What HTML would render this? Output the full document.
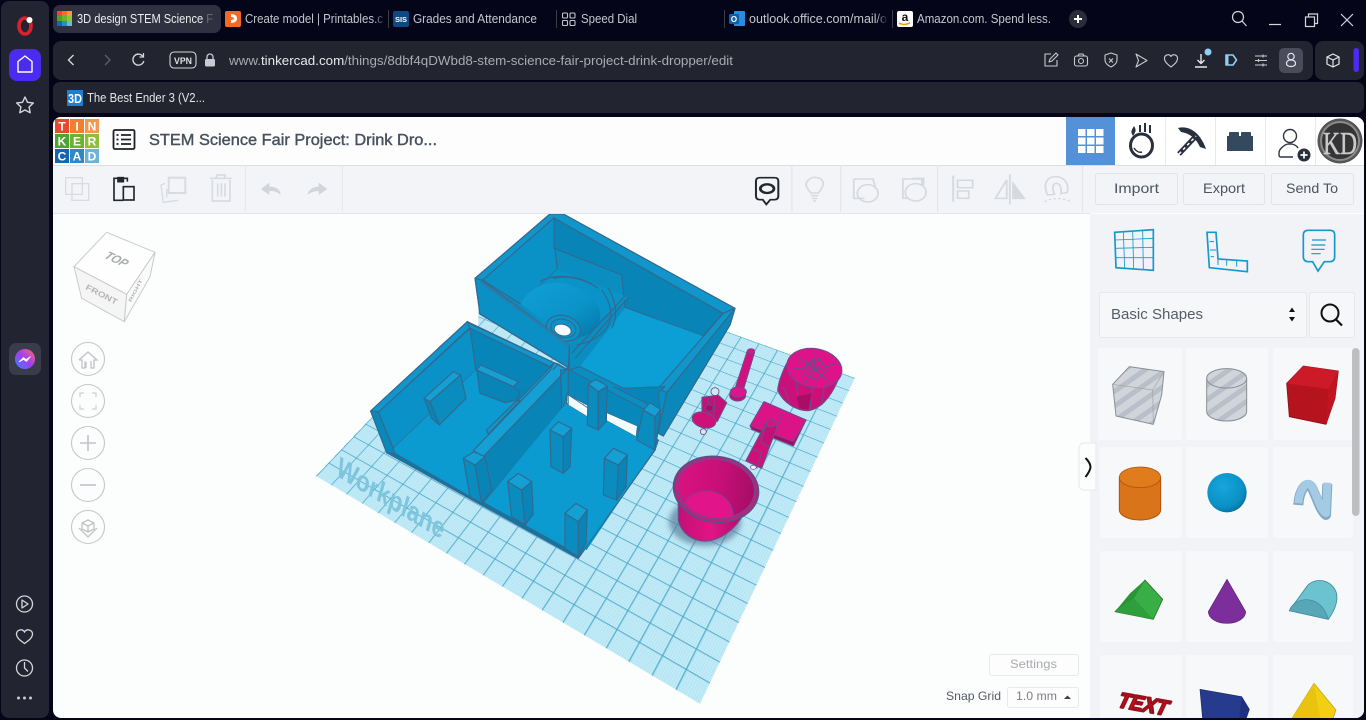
<!DOCTYPE html>
<html><head><meta charset="utf-8"><title>3D design STEM Science Fair Project</title>
<style>
html,body{margin:0;padding:0;width:1366px;height:720px;overflow:hidden;background:#05051a}
svg{position:absolute;display:block}
#page{position:absolute;left:53px;top:117px;width:1311px;height:601px;border-radius:8px;overflow:hidden;background:#fcfdfd}
#origin{position:absolute;left:-53px;top:-117px;width:0;height:0}
#plane{position:absolute;left:0;top:0;width:1000px;height:1000px;transform-origin:0 0;
transform:matrix3d(.17426,.05026,0,-.00018449,-.27333,.11809,0,-.00020989,0,0,1,0,523,258,0,1);
background-color:#c6ecf8;
background-image:linear-gradient(to right,rgba(70,165,200,.72) 2.6px,transparent 2.6px),linear-gradient(to bottom,rgba(70,165,200,.72) 2.6px,transparent 2.6px),linear-gradient(to right,rgba(95,190,220,.24) 1.4px,transparent 1.4px),linear-gradient(to bottom,rgba(95,190,220,.24) 1.4px,transparent 1.4px);
background-size:50px 50px,50px 50px,5px 5px,5px 5px}
text{font-family:"Liberation Sans",sans-serif}
</style></head><body>
<svg width="1366" height="720" viewBox="0 0 1366 720" style="left:0;top:0">
<defs>
<linearGradient id="fade" x1="0" x2="1"><stop offset="0" stop-color="#05051a" stop-opacity="0"/><stop offset="1" stop-color="#05051a"/></linearGradient>
<linearGradient id="msg" x1="0" y1="1" x2="1" y2="0"><stop offset="0" stop-color="#2f8cff"/><stop offset=".5" stop-color="#a33df0"/><stop offset="1" stop-color="#ff6a6a"/></linearGradient>
</defs>
<rect width="1366" height="720" fill="#05051a"/>
<!-- sidebar -->
<rect x="1" y="1" width="48" height="717" rx="8" fill="#222431"/>
<ellipse cx="25" cy="26" rx="6" ry="8" fill="none" stroke="#d8222e" stroke-width="3.6"/>
<circle cx="29.5" cy="20" r="3" fill="#fff"/>
<rect x="9" y="49" width="32" height="32" rx="8" fill="#4b2bf0"/>
<path d="M18 61.5 25 56l7 5.5V72H18Z" fill="none" stroke="#fff" stroke-width="1.4" stroke-linejoin="round"/>
<path d="M25 97l2.5 5.3 5.8.7-4.2 4 1.1 5.7L25 110l-5.2 2.7 1.1-5.7-4.2-4 5.8-.7Z" fill="none" stroke="#d5d6da" stroke-width="1.4" stroke-linejoin="round"/>
<rect x="9" y="343" width="32" height="32" rx="7" fill="#3a3c4b"/>
<circle cx="25" cy="359" r="10" fill="url(#msg)"/>
<path d="M19 362l4.5-4.5 2.5 2 4.5-3-4 5-3-2Z" fill="#fff" stroke="#fff" stroke-width=".7"/>
<g fill="none" stroke="#d5d6da" stroke-width="1.3">
<circle cx="24.5" cy="604" r="8"/><path d="M22 600l6 4-6 4Z" stroke-linejoin="round"/>
<path d="M24.5 643.5c-4-3-8-5.500-8-9.500a4.300 4.300 0 0 1 8-2 4.300 4.300 0 0 1 8 2c0 4-4 6.500-8 9.500Z"/>
<circle cx="24.500" cy="668" r="8"/><path d="M24.500 662v6l3.500 3.500"/>
</g>
<g fill="#c9cad0"><circle cx="18.500" cy="698" r="1.500"/><circle cx="24.500" cy="698" r="1.500"/><circle cx="30.500" cy="698" r="1.500"/></g>
<!-- tabs -->
<rect x="53" y="5" width="168" height="28" rx="7" fill="#2f3140"/>
<g font-size="12.500" fill="#c5c6cc">
<text x="77" y="23" textLength="136" lengthAdjust="spacingAndGlyphs" fill="#eceded">3D design STEM Science F</text>
<text x="245" y="23" textLength="138" lengthAdjust="spacingAndGlyphs">Create model | Printables.c</text>
<text x="413" y="23" textLength="124" lengthAdjust="spacingAndGlyphs">Grades and Attendance</text>
<text x="581" y="23" textLength="56" lengthAdjust="spacingAndGlyphs">Speed Dial</text>
<text x="749" y="23" textLength="138" lengthAdjust="spacingAndGlyphs">outlook.office.com/mail/o</text>
<text x="917" y="23" textLength="134" lengthAdjust="spacingAndGlyphs">Amazon.com. Spend less. </text>
</g>
<rect x="203" y="8" width="15" height="22" fill="#2f3140" opacity=".7"/>
<rect x="373" y="8" width="13" height="22" fill="url(#fade)"/>
<rect x="875" y="8" width="13" height="22" fill="url(#fade)"/>
<g stroke="#3a3c48" stroke-width="1"><path d="M388.500 10v18M556.500 10v18M724.500 10v18M892.500 10v18"/></g>
<!-- favicons -->
<rect x="57" y="11" width="5" height="5" fill="#e8482f"/><rect x="62" y="11" width="5" height="5" fill="#f0712e"/><rect x="67" y="11" width="5" height="5" fill="#f29a4a"/>
<rect x="57" y="16" width="5" height="5" fill="#4a9f35"/><rect x="62" y="16" width="5" height="5" fill="#6db32f"/><rect x="67" y="16" width="5" height="5" fill="#92c43a"/>
<rect x="57" y="21" width="5" height="5" fill="#1668ae"/><rect x="62" y="21" width="5" height="5" fill="#2f8ac6"/><rect x="67" y="21" width="5" height="5" fill="#70b6da"/>
<rect x="225" y="11" width="16" height="16" rx="2" fill="#f26a26"/><path d="M231 14c4 0 6 2 6 4.500S235 23 231 23v-3c1.500 0 3-.5 3-1.500S232.500 17 231 17Z" fill="#fff"/>
<rect x="393" y="11" width="16" height="16" rx="2" fill="#0b4a82"/><text x="401" y="22" font-size="7.500" font-weight="700" fill="#fff" text-anchor="middle">SIS</text>
<g fill="none" stroke="#c5c6cc" stroke-width="1.100"><rect x="562.500" y="13" width="5" height="5" rx="1"/><rect x="570" y="13" width="5" height="5" rx="1"/><rect x="562.500" y="20.500" width="5" height="5" rx="1"/><rect x="570" y="20.500" width="5" height="5" rx="1"/></g>
<rect x="734" y="11" width="11" height="15" rx="1" fill="#2a8ddb"/><rect x="729" y="14" width="10" height="10" rx="1" fill="#0c5fa8"/><text x="734" y="22" font-size="8" font-weight="700" fill="#fff" text-anchor="middle">O</text>
<rect x="897" y="11" width="16" height="16" rx="2" fill="#fff"/><text x="905" y="21" font-size="12" font-weight="700" fill="#111" text-anchor="middle">a</text><path d="M899 23c3 2 8 2 11-.5" stroke="#f09a1a" stroke-width="1.500" fill="none"/>
<circle cx="1078" cy="19" r="9" fill="#2a2c3a"/><path d="M1078 15v8M1074 19h8" stroke="#fff" stroke-width="2"/>
<!-- window controls -->
<g fill="none" stroke="#d5d6da" stroke-width="1.200">
<circle cx="1238" cy="17" r="5.500"/><path d="M1242 21l4.500 5"/>
<path d="M1269 24.500h12"/>
<rect x="1305.500" y="17" width="9" height="9.500"/><path d="M1308.500 17v-3h9v9.500h-3"/>
<path d="M1341 14l12 12M1353 14l-12 12"/>
</g>
<!-- address bar -->
<rect x="53" y="41" width="1260" height="39" rx="8" fill="#22242f"/>
<rect x="1315" y="41" width="49" height="39" rx="8" fill="#22242f"/>
<rect x="53" y="82" width="1311" height="31" rx="7" fill="#22242f"/>
<g fill="none" stroke="#d5d6da" stroke-width="1.400">
<path d="M73.500 55l-5 5 5 5"/><path d="M105 55l5 5-5 5" stroke="#5a5c68"/>
<path d="M143 56.500a5.500 5.500 0 1 0 .8 4.500"/><path d="M143.500 53v4h-4" stroke-width="1.200"/>
<rect x="170" y="52" width="26" height="16" rx="4" stroke-width="1.100"/>
</g>
<text x="174" y="64" font-size="9.500" font-weight="700" fill="#e0e1e5" textLength="18" lengthAdjust="spacingAndGlyphs">VPN</text>
<rect x="205" y="59" width="10" height="7.500" rx="1.200" fill="#c9cad0"/><path d="M207 59v-2a3 3 0 0 1 6 0v2" fill="none" stroke="#c9cad0" stroke-width="1.300"/>
<text x="229" y="65" font-size="13" fill="#a9abb3" textLength="504" lengthAdjust="spacingAndGlyphs">www.<tspan fill="#e8e9ec">tinkercad.com</tspan>/things/8dbf4qDWbd8-stem-science-fair-project-drink-dropper/edit</text>
<g fill="none" stroke="#c9cad0" stroke-width="1.100" stroke-linejoin="round">
<path d="M1051 54h-6v12h12v-6M1049 62l1-3 6-6 2 2-6 6Z"/>
<rect x="1074.500" y="56" width="13" height="10" rx="2"/><circle cx="1081" cy="61" r="2.500"/><path d="M1078 56l1-2h4l1 2"/>
<path d="M1111 53l6 2v5c0 3-3 5.500-6 7-3-1.500-6-4-6-7v-5Z"/><path d="M1109 58.500l4 4M1113 58.500l-4 4"/>
<path d="M1136 54l11 6.500-11 6.500 2.500-6.500Z"/>
<path d="M1171 67c-3-2.500-6.500-5-6.500-8.500a3.500 3.500 0 0 1 6.500-2 3.500 3.500 0 0 1 6.500 2c0 3.500-3.500 6-6.500 8.500Z"/>
<path d="M1201 54v9M1197.500 60l3.500 3.500 3.500-3.500M1195 67h12" stroke="#e5e6ea" stroke-width="1.400"/>
<path d="M1226 55h7l3.500 5-3.500 5h-7Z" stroke="#8cd0f5" stroke-width="1.600"/>
<path d="M1255 56h12M1255 60.500h12M1255 65h12"/><path d="M1263 54.500v3M1258.500 59v3M1263 63.500v3"/>
</g>
<rect x="1226" y="55" width="2.500" height="10" fill="#8cd0f5"/>
<circle cx="1208" cy="52" r="3.500" fill="#8cd0f5"/>
<rect x="1279" y="48" width="24" height="25" rx="5" fill="#4a4c5c"/>
<g fill="none" stroke="#e5e6ea" stroke-width="1.200"><circle cx="1291" cy="56.500" r="3.200"/><path d="M1291 60c-3 0-4.500 1.500-4.500 3.500s2 3 4.500 3 4.500-1 4.500-3-1.500-3.500-4.500-3.500Z"/>
<path d="M1333 54l6 3v7l-6 3-6-3v-7Zm-6 3l6 3 6-3m-6 3v7"/></g>
<rect x="1353.500" y="48" width="5.500" height="24" rx="2.700" fill="#4b2bf0"/>
<!-- bookmarks -->
<rect x="67" y="90" width="16" height="16" fill="#1c7fd0"/>
<text x="68" y="103" font-size="13" font-weight="700" fill="#fff" textLength="14" lengthAdjust="spacingAndGlyphs">3D</text>
<text x="87" y="102" font-size="12.500" fill="#e3e4e8" textLength="118" lengthAdjust="spacingAndGlyphs">The Best Ender 3 (V2...</text>
</svg>

<div id="page">
<div id="origin"><div id="plane"></div>
<svg width="1366" height="720" viewBox="0 0 1366 720" style="left:0;top:0">
<defs>
<pattern id="st" width="36" height="36" patternUnits="userSpaceOnUse" patternTransform="rotate(-35)"><rect width="36" height="36" fill="#d0d5db"/><rect width="36" height="15" fill="#b8bfc8"/></pattern>
<linearGradient id="dome" x1="0" y1="0" x2="1" y2="1"><stop offset="0" stop-color="#0fa0d6"/><stop offset=".6" stop-color="#0a93c8"/><stop offset="1" stop-color="#0575a6"/></linearGradient>
<linearGradient id="cupin" x1="0" x2="1"><stop offset="0" stop-color="#d9127f"/><stop offset=".55" stop-color="#c70f78"/><stop offset="1" stop-color="#a50d66"/></linearGradient>
<linearGradient id="cupb" x1="0" x2="1"><stop offset="0" stop-color="#c30f76"/><stop offset=".5" stop-color="#e01585"/><stop offset="1" stop-color="#b00c6a"/></linearGradient>
<radialGradient id="sph" cx=".4" cy=".35" r=".75"><stop offset="0" stop-color="#16a7dc"/><stop offset=".7" stop-color="#0a8fc4"/><stop offset="1" stop-color="#05628f"/></radialGradient>
<filter id="blur" x="-30%" y="-30%" width="160%" height="160%"><feGaussianBlur stdDeviation="8"/></filter>
</defs>

<!-- patch above left room so plane does not peek out -->
<path d="M372 408 467 321 478 330 480 262 440 285 365 375Z" fill="#fcfdfd"/>
<text transform="matrix(.86 .52 -.28 .96 335 475)" font-size="28" font-weight="700" fill="#7fc5dd" textLength="124" lengthAdjust="spacingAndGlyphs">Workplane</text>

<!-- BLUE MODEL -->
<g transform="translate(350 210) scale(.33333)" stroke="#33698f" stroke-width="3.500" stroke-linejoin="round">
<path d="M375 205 600 12 640 12 1155 295 1140 345 940 678 925 670 925 620 655 480 650 470 390 312Z" fill="#0a8ec2"/>
<path d="M375 205 600 12 640 12 1155 295 1120 310 612 24 398 212Z" fill="#1096cb"/>
<path d="M398 210 612 24 615 115 622 178 512 282Z" fill="#0a92c7"/>
<path d="M612 24 1120 310 1058 378 825 292 815 195 612 115Z" fill="#0884b6"/>
<path d="M825 294 1058 378 945 530 820 535 690 470Z" fill="#0b9fd6" stroke="none"/>
<path d="M512 282 622 178 835 262 655 405Z" fill="#0a93c8" stroke="none"/>
<path d="M512 282C540 225 610 205 665 225 730 250 765 300 745 345 725 372 700 380 680 385 650 375 590 335 512 282Z" fill="url(#dome)" stroke="none"/>
<path d="M570 215C610 190 680 195 730 225M610 205C650 195 700 205 745 235M755 240C785 280 790 320 770 355 745 385 710 400 680 405M775 235C805 285 800 330 785 355" fill="none"/>
<path d="M835 262 675 445M825 258 665 430" fill="none"/>
<ellipse cx="640" cy="355" rx="52" ry="38" fill="#0a93c8" transform="rotate(15 640 355)"/>
<ellipse cx="640" cy="355" rx="38" ry="27" fill="#0a93c8" transform="rotate(15 640 355)"/>
<ellipse cx="638" cy="360" rx="26" ry="17" fill="#f4fbfe" stroke-width="3" transform="rotate(15 638 360)"/>
<path d="M392 212 658 405 658 472 388 310Z" fill="#0a8ec2"/>
<path d="M375 205 395 210 658 405 655 480 650 470 390 312Z" fill="#0a90c5"/>
<path d="M392 215 660 408" fill="none" stroke-width="7" stroke="#2f7aa6"/>
<path d="M390 312 650 470" fill="none"/>
<path d="M1120 310 1155 295 950 548 925 535Z" fill="#1096cb"/>
<path d="M1155 295 1140 345 940 678 925 670 950 548Z" fill="#0a88ba"/>
<path d="M655 480 690 470 820 535 945 530 925 545 925 670 655 540Z" fill="#0a8ec2"/>
<path d="M820 535 945 530 925 548 930 600 790 530" fill="#0885b8" stroke-width="3"/>
<path d="M62 603 352 335 610 458 655 480 650 580 925 690 915 720 685 1045 110 728Z" fill="#0b9ad0"/>
<path d="M640 590 925 700 710 1020 400 880Z" fill="#0b9bd1" stroke="none"/>
<path d="M62 603 352 335 368 345 85 607 110 728Z" fill="#1096cb"/>
<path d="M85 607 360 355 378 480 130 715Z" fill="#0a92c8"/>
<path d="M360 355 612 460 500 575 378 480Z" fill="#0885b8"/>
<path d="M130 715 378 480 395 555 500 575 410 660 405 680 340 745 355 855Z" fill="#0b9bd1" stroke="none"/>
<path d="M352 335 368 345 612 458 600 470 360 355Z" fill="#1096cb"/>
<path d="M62 603 85 605 135 730 110 728Z" fill="#0a88ba"/>
<path d="M222 565 310 485 332 495 240 575Z" fill="#14a0d4"/>
<path d="M240 575 332 495 348 565 268 645Z" fill="#0a8cbf"/>
<path d="M222 565 240 575 268 645 245 625Z" fill="#0884b6"/>
<path d="M380 480 392 465 505 515 490 530Z" fill="#14a0d4"/>
<path d="M380 480 490 530 510 545 500 570 465 578 390 550Z" fill="#0884b6"/>
<path d="M410 660 500 572 510 572 415 672Z" fill="#1096cb"/>
<path d="M370 722 600 482 612 458 650 478 635 495 400 740Z" fill="#14a0d4"/>
<path d="M405 735 632 498 636 605 400 878Z" fill="#0884b6"/>
<path d="M632 480 655 478 655 540 636 605Z" fill="#0a8ec2"/>
<path d="M612 458 625 462 608 480M625 462 650 478 632 498" fill="none"/>
<path d="M655 478 925 620 920 690 860 660 655 555Z" fill="#0888ba" stroke-width="3"/>
<path d="M655 555 715 595 715 622 655 585Z" fill="#f4fbfe" stroke-width="2"/>
<path d="M770 608 862 648 858 680 770 632Z" fill="#f4fbfe" stroke-width="2"/>
<path d="M640 590 655 585 715 622 770 632 858 680 925 700 710 1020 400 880Z" fill="#0b9bd1" stroke="none"/>
<path d="M932 610 915 720 685 1045" fill="none"/>
<path d="M110 728 135 730 360 860 405 880 685 1035 685 1045Z" fill="#0a78a8"/>
<path d="M600 660 640 680 640 790 603 770Z" fill="#0a8cbf"/><path d="M640 680 665 655 660 770 640 790Z" fill="#0884b6"/><path d="M600 660 625 635 665 655 640 680Z" fill="#14a0d4"/>
<path d="M763 745 805 765 800 870 760 855Z" fill="#0a8cbf"/><path d="M805 765 832 735 828 830 800 870Z" fill="#0884b6"/><path d="M763 745 790 715 832 735 805 765Z" fill="#14a0d4"/>
<path d="M473 815 515 840 525 945 485 920Z" fill="#0a8cbf"/><path d="M515 840 545 815 550 912 525 945Z" fill="#0884b6"/><path d="M473 815 505 790 545 815 515 840Z" fill="#14a0d4"/>
<path d="M645 910 685 935 685 1040 645 1015Z" fill="#0a8cbf"/><path d="M685 935 712 900 708 1000 685 1040Z" fill="#0884b6"/><path d="M645 910 678 880 712 900 685 935Z" fill="#14a0d4"/>
<path d="M340 745 375 765 395 880 360 860Z" fill="#0a8cbf"/><path d="M375 765 405 740 425 840 395 880Z" fill="#0884b6"/><path d="M340 745 372 725 405 740 375 765Z" fill="#14a0d4"/>
<path d="M715 522 745 545 745 660 712 645Z" fill="#0a8cbf"/><path d="M745 545 772 528 768 635 745 660Z" fill="#0884b6"/><path d="M715 522 738 508 772 528 745 545Z" fill="#14a0d4"/>
<path d="M880 600 915 620 915 720 860 690Z" fill="#0a8cbf"/><path d="M915 620 932 598 920 690 915 720Z" fill="#0884b6"/><path d="M880 600 900 578 932 598 915 620Z" fill="#14a0d4"/>
</g>

<!-- PINK PARTS -->
<g transform="translate(640 340) scale(.33333)" stroke="#6f4a8a" stroke-width="3.500" stroke-linejoin="round">
<ellipse cx="195" cy="545" rx="108" ry="72" fill="#5c7f9c" opacity=".7" stroke="none" filter="url(#blur)"/>
<path d="M322 32 344 36 310 150 285 146Z" fill="#d21180" stroke-width="3"/>
<ellipse cx="333" cy="33" rx="11" ry="7" fill="#e0148a" stroke-width="2.500"/>
<ellipse cx="293" cy="166" rx="24" ry="17" fill="#c40f76" stroke-width="3"/>
<ellipse cx="295" cy="156" rx="24" ry="15" fill="#e0148a" stroke-width="3"/>
<path d="M440 70 C425 100 415 130 413 150 C430 190 470 212 505 212 C550 205 580 160 602 100Z" fill="#cb1079"/>
<path d="M430 140 450 190M462 90 480 205M520 100 510 212M560 90 545 195" fill="none"/>
<path d="M470 170 478 205 505 208 515 160Z" fill="#a90d66" stroke="none"/>
<ellipse cx="523" cy="84" rx="83" ry="58" fill="#de1389" transform="rotate(10 523 84)"/>
<path d="M475 50 525 90 590 70M520 35 525 90 490 130M460 85 525 90 570 125M500 70 540 55 560 90 530 120 495 105Z" fill="none"/>
<circle cx="525" cy="72" r="14" fill="none"/>
<path d="M372 185 498 240 460 318 330 258Z" fill="#dc1387"/>
<path d="M330 258 335 268 460 318 498 240 460 305Z" fill="#a30c63" stroke-width="2.500"/>
<path d="M428 222 398 282" fill="none"/>
<path d="M380 245 410 262 365 385 318 362Z" fill="#cf1079"/>
<path d="M335 325 365 340 350 385" fill="none"/>
<path d="M376 262 398 240 412 262 388 320 362 305Z" fill="#c40f76"/>
<ellipse cx="393" cy="250" rx="14" ry="11" fill="#d7127f"/>
<ellipse cx="340" cy="382" rx="9" ry="6" fill="#eaf6fa" stroke-width="2"/>
<circle cx="225" cy="155" r="12" fill="#cfe9f2" stroke-width="2.500"/>
<circle cx="190" cy="275" r="9" fill="#cfe9f2" stroke-width="2.500"/>
<path d="M186 172 235 166 260 188 244 220 232 244 192 245 186 210Z" fill="#c60f77"/>
<ellipse cx="192" cy="240" rx="36" ry="23" fill="#cf1079" transform="rotate(15 192 240)"/>
<path d="M205 172 208 235M225 175 222 230" fill="none" stroke-width="2.500"/>
<ellipse cx="208" cy="204" rx="12" ry="10" fill="#a80d66" stroke-width="2.500"/>
<path d="M115 480 115 540C125 585 165 605 200 603 240 600 285 570 312 520Z" fill="url(#cupb)"/>
<ellipse cx="228" cy="448" rx="128" ry="98" fill="#b5257f" stroke="#5c4f85" stroke-width="5" transform="rotate(8 228 448)"/>
<ellipse cx="228" cy="446" rx="116" ry="88" fill="url(#cupin)" transform="rotate(8 228 446)"/>
<path d="M135 490C140 465 175 450 210 453 250 458 280 490 280 528 235 545 165 535 135 490Z" fill="#e1148a" stroke-width="2.500"/>
</g>

<!-- top bars -->
<rect x="53" y="117" width="1313" height="48" fill="#fff"/>
<rect x="53" y="117" width="1013" height="48" fill="#fdfdfd"/>
<rect x="53" y="165" width="1313" height="1.500" fill="#dcdee2"/>
<rect x="53" y="166" width="1313" height="47" fill="#f2f4f7"/>
<rect x="53" y="213" width="1037" height="1" fill="#e3e5e8"/>
<g font-size="12" font-weight="700" fill="#fff" text-anchor="middle">
<rect x="55" y="119" width="14" height="14" fill="#e5492e"/><text x="62" y="130.500">T</text>
<rect x="70" y="119" width="14" height="14" fill="#f08030"/><text x="77" y="130.500">I</text>
<rect x="85" y="119" width="14" height="14" fill="#f2994d"/><text x="92" y="130.500">N</text>
<rect x="55" y="134" width="14" height="14" fill="#4da436"/><text x="62" y="145.500">K</text>
<rect x="70" y="134" width="14" height="14" fill="#6eb130"/><text x="77" y="145.500">E</text>
<rect x="85" y="134" width="14" height="14" fill="#8fbf3a"/><text x="92" y="145.500">R</text>
<rect x="55" y="149" width="14" height="14" fill="#1566ad"/><text x="62" y="160.500">C</text>
<rect x="70" y="149" width="14" height="14" fill="#2e88c5"/><text x="77" y="160.500">A</text>
<rect x="85" y="149" width="14" height="14" fill="#6db3d8"/><text x="92" y="160.500">D</text>
</g>
<g fill="none" stroke="#1d2126" stroke-width="1.800"><rect x="113.500" y="130" width="21" height="19" rx="1.500"/><path d="M121 135h10M121 139.500h10M121 144h10M116.500 135h2M116.500 139.500h2M116.500 144h2"/></g>
<text x="149" y="145" font-size="16" fill="#47505d" stroke="#47505d" stroke-width=".4" textLength="288" lengthAdjust="spacingAndGlyphs">STEM Science Fair Project: Drink Dro...</text>
<g transform="translate(50 115) scale(.33333)" fill="none" stroke="#d8dbe0" stroke-width="4">
<rect x="47" y="188" width="50" height="50"/><rect x="66" y="206" width="50" height="50"/>
<g stroke="#23272c" stroke-width="5"><path d="M232 200V190H192V256H220"/><rect x="220" y="215" width="32" height="40"/><rect x="204" y="188" width="16" height="12" fill="#23272c"/></g>
<rect x="356" y="188" width="50" height="46" stroke-width="6"/><path d="M345 205 333 210 340 262 385 256M350 222V248"/>
<path d="M480 190H545M500 190V180H525V190M487 195V258H540V195M503 205V245M514 205V245M525 205V245" stroke-width="5"/>
<path d="M633 222 658 203V215C680 215 692 225 692 240 682 230 672 228 658 228V240Z" fill="#d2d5da" stroke="none"/>
<path d="M832 222 806 203V215C790 215 775 225 772 240 782 232 792 228 806 228V240Z" fill="#d2d5da" stroke="none"/>
<path d="M586 150V290M877 150V290" stroke="#e3e5e8" stroke-width="3"/>
</g>
<g transform="translate(740 115) scale(.3992 .33333)" fill="none" stroke="#d6d9de" stroke-width="4.500">
<path d="M130 150V290M252 150V290M495 150V290M858 150V290" stroke="#e3e5e8" stroke-width="3"/>
<path d="M50 188H86Q96 188 96 198V243Q96 254 86 254H76L66 268 57 254H50Q40 254 40 243V198Q40 188 50 188Z" stroke="#23272c" stroke-width="5"/>
<ellipse cx="68" cy="221" rx="17" ry="13" stroke="#23272c" stroke-width="7"/>
<path d="M178 234C165 218 163 205 170 197 180 182 200 186 206 197 212 208 205 222 196 234ZM178 242H196M180 250H194M183 258H191"/>
<path d="M285 192H333C335 205 340 208 338 220M285 192V250H312" /><circle cx="320" cy="235" r="26"/>
<rect x="408" y="192" width="48" height="58"/><circle cx="440" cy="232" r="26" fill="#f2f4f7"/><path d="M432 190H460V210"/>
<path d="M534 182V260" stroke-width="5"/><rect x="545" y="196" width="38" height="22"/><rect x="545" y="228" width="28" height="22"/>
<path d="M668 195 640 250H668ZM676 178V268" /><path d="M684 205 712 250H684Z" fill="#d6d9de"/>
<path d="M770 240C758 205 770 185 790 185 812 185 825 205 820 232L804 236C806 215 800 205 792 205 782 205 782 222 788 238Z"/>
<path d="M763 260C780 250 800 245 830 260" stroke-dasharray="6 6" stroke-width="4"/>
</g>
<g font-size="14" fill="#4d555f">
<rect x="1095.500" y="173.500" width="82" height="31" rx="2" fill="#f2f4f7" stroke="#e2e4e8"/>
<rect x="1183.500" y="173.500" width="81" height="31" rx="2" fill="#f2f4f7" stroke="#e2e4e8"/>
<rect x="1271.500" y="173.500" width="82" height="31" rx="2" fill="#f2f4f7" stroke="#e2e4e8"/>
<text x="1114" y="193" textLength="45" lengthAdjust="spacingAndGlyphs">Import</text>
<text x="1203" y="193" textLength="42" lengthAdjust="spacingAndGlyphs">Export</text>
<text x="1286" y="193" textLength="52" lengthAdjust="spacingAndGlyphs">Send To</text>
</g>
<rect x="1066" y="117" width="49" height="48" fill="#5591d9"/>
<g fill="#fff"><rect x="1078" y="129" width="7.500" height="7"/><rect x="1087" y="129" width="7.500" height="7"/><rect x="1096" y="129" width="7.500" height="7"/><rect x="1078" y="137.500" width="7.500" height="7"/><rect x="1087" y="137.500" width="7.500" height="7"/><rect x="1096" y="137.500" width="7.500" height="7"/><rect x="1078" y="146" width="7.500" height="7"/><rect x="1087" y="146" width="7.500" height="7"/><rect x="1096" y="146" width="7.500" height="7"/></g>
<path d="M1165.500 117v48M1215.500 117v48M1265.500 117v48M1315.500 117v48" stroke="#e8e9ec"/>
<g fill="none" stroke="#27303c" stroke-width="2.300">
<ellipse cx="1141.500" cy="145.500" rx="11" ry="11.500" stroke-width="3"/>
<path d="M1134 148c2 3 5 5 8 4" stroke-width="1.500"/>
<path d="M1140 125v7M1145 123v9M1150 125v8" stroke-width="2"/>
<path d="M1134 127c-2 3-3 5-1 8 2-3 3-5 1-8Z" fill="#27303c" stroke-width="1"/>
</g>
<path d="M1178 128C1190 125 1201 134 1206 149L1200 147C1196 138 1189 133 1181 132Z" fill="#27303c"/>
<path d="M1179 154 1196 136" stroke="#27303c" stroke-width="5"/>
<path d="M1179 154 1196 136" stroke="#fff" stroke-width="1.500" stroke-dasharray="3 3"/>
<rect x="1227" y="136" width="26" height="15" fill="#34495e"/><rect x="1229" y="132" width="10" height="5" rx="1" fill="#34495e"/><rect x="1241" y="132" width="10" height="5" rx="1" fill="#34495e"/>
<g fill="none" stroke="#2e3742" stroke-width="1.400"><circle cx="1290" cy="136" r="6.500"/><path d="M1281 157c-2 0-2-1-2-4 0-4 5-8 9-9h4c2 .5 5 2 6 4M1281 157h12"/></g>
<circle cx="1304" cy="155" r="6.500" fill="#27303c"/><path d="M1304 151.500v7M1300.500 155h7" stroke="#fff" stroke-width="1.700"/>
<circle cx="1340" cy="141" r="22.500" fill="#555"/>
<circle cx="1340" cy="141" r="19" fill="#343435" stroke="#8b8b8b" stroke-width="2"/>
<text x="1340" y="154" font-size="32" fill="#c9cacc" stroke="#c9cacc" stroke-width=".5" text-anchor="middle" textLength="34" lengthAdjust="spacingAndGlyphs" style="font-family:'Liberation Serif',serif">KD</text>

<g transform="translate(55 215) scale(.33333)">
<path d="M155 52 300 112 215 238 57 155Z" fill="#fefefe" stroke="#c8cacb" stroke-width="3"/>
<path d="M57 155 215 238 208 320 80 250Z" fill="#f5f5f5" stroke="#c8cacb" stroke-width="3"/>
<path d="M215 238 300 112 285 185 208 320Z" fill="#fafafa" stroke="#c8cacb" stroke-width="3"/>
<text transform="translate(145 128) rotate(25) skewX(-15)" font-size="36" font-weight="700" font-style="italic" fill="#a9abac" textLength="70" lengthAdjust="spacingAndGlyphs">TOP</text>
<text transform="translate(90 222) rotate(27)" font-size="24" font-weight="700" fill="#b3b5b6" textLength="104" lengthAdjust="spacingAndGlyphs">FRONT</text>
<text transform="translate(228 262) rotate(-62)" font-size="14" font-weight="700" fill="#b3b5b6" textLength="75" lengthAdjust="spacingAndGlyphs">RIGHT</text>
</g>
<g fill="#fcfdfd" stroke="#c4c6c8" stroke-width="1.100">
<circle cx="88" cy="359" r="16.500"/><circle cx="88" cy="401" r="16.500"/><circle cx="88" cy="443" r="16.500"/><circle cx="88" cy="485" r="16.500"/><circle cx="88" cy="527" r="16.500"/>
</g>
<g fill="none" stroke="#c0c3c7" stroke-width="1.300">
<path d="M79 360l9-8 9 8h-3v8h-3v-6h-1M79 360h3v8h3v-6h1M86 368v-6"/>
<path d="M80 397v-4h4M92 393h4v4M96 405v4h-4M84 409h-4v-4" stroke="#d0d3d7"/>
<path d="M80 443h16M88 435v16" stroke-width="1.600"/>
<path d="M80 485h16" stroke-width="1.600"/>
<path d="M88 520l6 3v6l-6 3-6-3v-6Zm-6 3l6 3 6-3m-6 3v6M79 528l9 9 9-9"/>
</g>
<rect x="989.500" y="654.500" width="89" height="21" rx="2" fill="#fdfdfd" stroke="#e8e9eb"/>
<text x="1010" y="668" font-size="12" fill="#a8abb0" textLength="47" lengthAdjust="spacingAndGlyphs">Settings</text>
<text x="946" y="700" font-size="12" fill="#555b63" textLength="55" lengthAdjust="spacingAndGlyphs">Snap Grid</text>
<rect x="1007.500" y="687.500" width="71" height="20" rx="2" fill="#fdfdfd" stroke="#e8e9eb"/>
<text x="1016" y="700" font-size="12" fill="#7a7f86" textLength="41" lengthAdjust="spacingAndGlyphs">1.0 mm</text>
<path d="M1064 699l3.500-3.500 3.500 3.500Z" fill="#3a3f45"/>

<rect x="1090" y="214" width="276" height="506" fill="#f1f3f6"/>
<path d="M1096 443h-12a5 5 0 0 0-5 5v37a5 5 0 0 0 5 5h12Z" fill="#fcfdfd" stroke="#e6e8eb"/>
<path d="M1085.500 458c3 3 5 6 5 9s-2 6-5 10" fill="none" stroke="#111" stroke-width="2"/>
<g transform="translate(1090 215) scale(.33333)" fill="none" stroke="#1697cd" stroke-width="5">
<path d="M74 52 190 44 190 166 78 158Z"/>
<path d="M76 75 190 70M77 100 190 97M77 128 190 128M100 50 104 160M128 48 131 162M158 46 160 164" stroke-width="2.500"/>
<path d="M351 52 378 52 384 132 472 138 472 170 358 158Z"/>
<path d="M358 80H372M360 105H378M362 125H372M410 137V152M440 138V155M384 135V150" stroke-width="3"/>
<path d="M655 46H720Q734 46 734 60V125Q734 140 720 140H703L684 168 668 140H655Q640 140 640 125V60Q640 46 655 46Z"/>
<path d="M666 75H708M664 90H706M664 103H704M664 116H692" stroke-width="3.500"/>
</g>
<rect x="1099.500" y="292.500" width="207" height="45" rx="2" fill="#f6f7f9" stroke="#e6e8eb"/>
<rect x="1309.500" y="292.500" width="45" height="45" rx="2" fill="#f6f7f9" stroke="#e6e8eb"/>
<text x="1111" y="319" font-size="14.500" fill="#565d67" textLength="92" lengthAdjust="spacingAndGlyphs">Basic Shapes</text>
<path d="M1289 312l3-4.500 3 4.500ZM1289 317l3 4.500 3-4.500Z" fill="#111"/>
<circle cx="1330" cy="313" r="8.500" fill="none" stroke="#111" stroke-width="2"/><path d="M1336 319.500l6 6" stroke="#111" stroke-width="2.200"/>
<g fill="#f7f8fa">
<rect x="1098" y="348" width="84" height="92" rx="3"/><rect x="1186" y="348" width="82" height="92" rx="3"/><rect x="1273" y="348" width="80" height="92" rx="3"/>
<rect x="1100" y="447" width="82" height="91" rx="3"/><rect x="1186" y="447" width="82" height="91" rx="3"/><rect x="1273" y="447" width="80" height="91" rx="3"/>
<rect x="1100" y="551" width="82" height="91" rx="3"/><rect x="1186" y="551" width="82" height="91" rx="3"/><rect x="1273" y="551" width="80" height="91" rx="3"/>
<rect x="1100" y="655" width="82" height="70" rx="3"/><rect x="1186" y="655" width="82" height="70" rx="3"/><rect x="1273" y="655" width="80" height="70" rx="3"/>
</g>
<rect x="1352" y="348" width="7.500" height="168" rx="3.700" fill="#bdbec0"/>
<g transform="translate(1090 215) scale(.33333)" stroke-linejoin="round">
<path d="M118 455 222 470 215 540 190 628 78 603 68 508Z" fill="url(#st)" stroke="#8a8e94" stroke-width="3"/>
<path d="M68 508 188 525 222 470M188 525 190 628" fill="none" stroke="#a0a4aa" stroke-width="2"/>
<path d="M350 490V590A60 28 0 0 0 470 590V490Z" fill="url(#st)" stroke="#8a8e94" stroke-width="3"/>
<ellipse cx="410" cy="490" rx="60" ry="29" fill="url(#st)" stroke="#8a8e94" stroke-width="3"/>
<path d="M640 453 745 468 735 550 708 628 598 605 590 505Z" fill="#b5141f" stroke="#8e0f18" stroke-width="2.500"/>
<path d="M640 453 745 468 715 522 590 505Z" fill="#cc1a28"/>
<path d="M715 522 745 468 735 550 708 628Z" fill="#c0141f"/>
</g>
<g transform="translate(1090 440) scale(.33333)" stroke-linejoin="round">
<path d="M88 112V210A62 30 0 0 0 212 210V112Z" fill="#d9741a" stroke="#a85510" stroke-width="3"/>
<ellipse cx="150" cy="112" rx="62" ry="31" fill="#e07c1b" stroke="#a85510" stroke-width="2.500"/>
<circle cx="411" cy="158" r="59" fill="url(#sph)"/>
<path d="M625 195C628 150 650 120 665 142 680 170 690 212 708 225L712 132" fill="none" stroke="#7ea8c8" stroke-width="30"/>
<path d="M625 190C628 148 650 118 665 138 680 166 690 208 708 220L712 128" fill="none" stroke="#a4cae4" stroke-width="24"/>
<path d="M75 515 165 420 218 478 190 538Z" fill="#39ad46" stroke="#217a2b" stroke-width="2.500"/>
<path d="M75 515 120 460 165 420 132 475Z" fill="#2a9537"/>
<path d="M75 515 132 475 190 538Z" fill="#2f9e3d"/>
<path d="M411 418 355 515A56 35 0 0 0 467 515Z" fill="#7c2f9c" stroke="#5b1f78" stroke-width="2"/>
<path d="M598 512 650 440C670 412 722 415 738 455 746 480 735 510 715 538Z" fill="#6cc3d0" stroke="#3f8a9c" stroke-width="2.500"/>
<path d="M598 512C612 468 695 460 715 538Z" fill="#58a7b8" stroke="#3f8a9c" stroke-width="2"/>
<text transform="translate(78 800) rotate(10) skewX(-15)" font-size="64" font-weight="700" fill="#c0141f" stroke="#9a0f1a" stroke-width="6" textLength="150" lengthAdjust="spacingAndGlyphs">TEXT</text>
<path d="M330 748 455 770 478 808 460 860H340Z" fill="#263a8e" stroke="#1a2a6c" stroke-width="2"/>
<path d="M455 770 478 808 460 860 445 860Z" fill="#1f3080"/>
<path d="M672 730 738 810 720 860H590Z" fill="#f2cf14" stroke="#b99c10" stroke-width="2"/>
<path d="M672 730 590 860H695Z" fill="#e8c30f"/>
</g>
</svg>
</div>
</div>
</body></html>
